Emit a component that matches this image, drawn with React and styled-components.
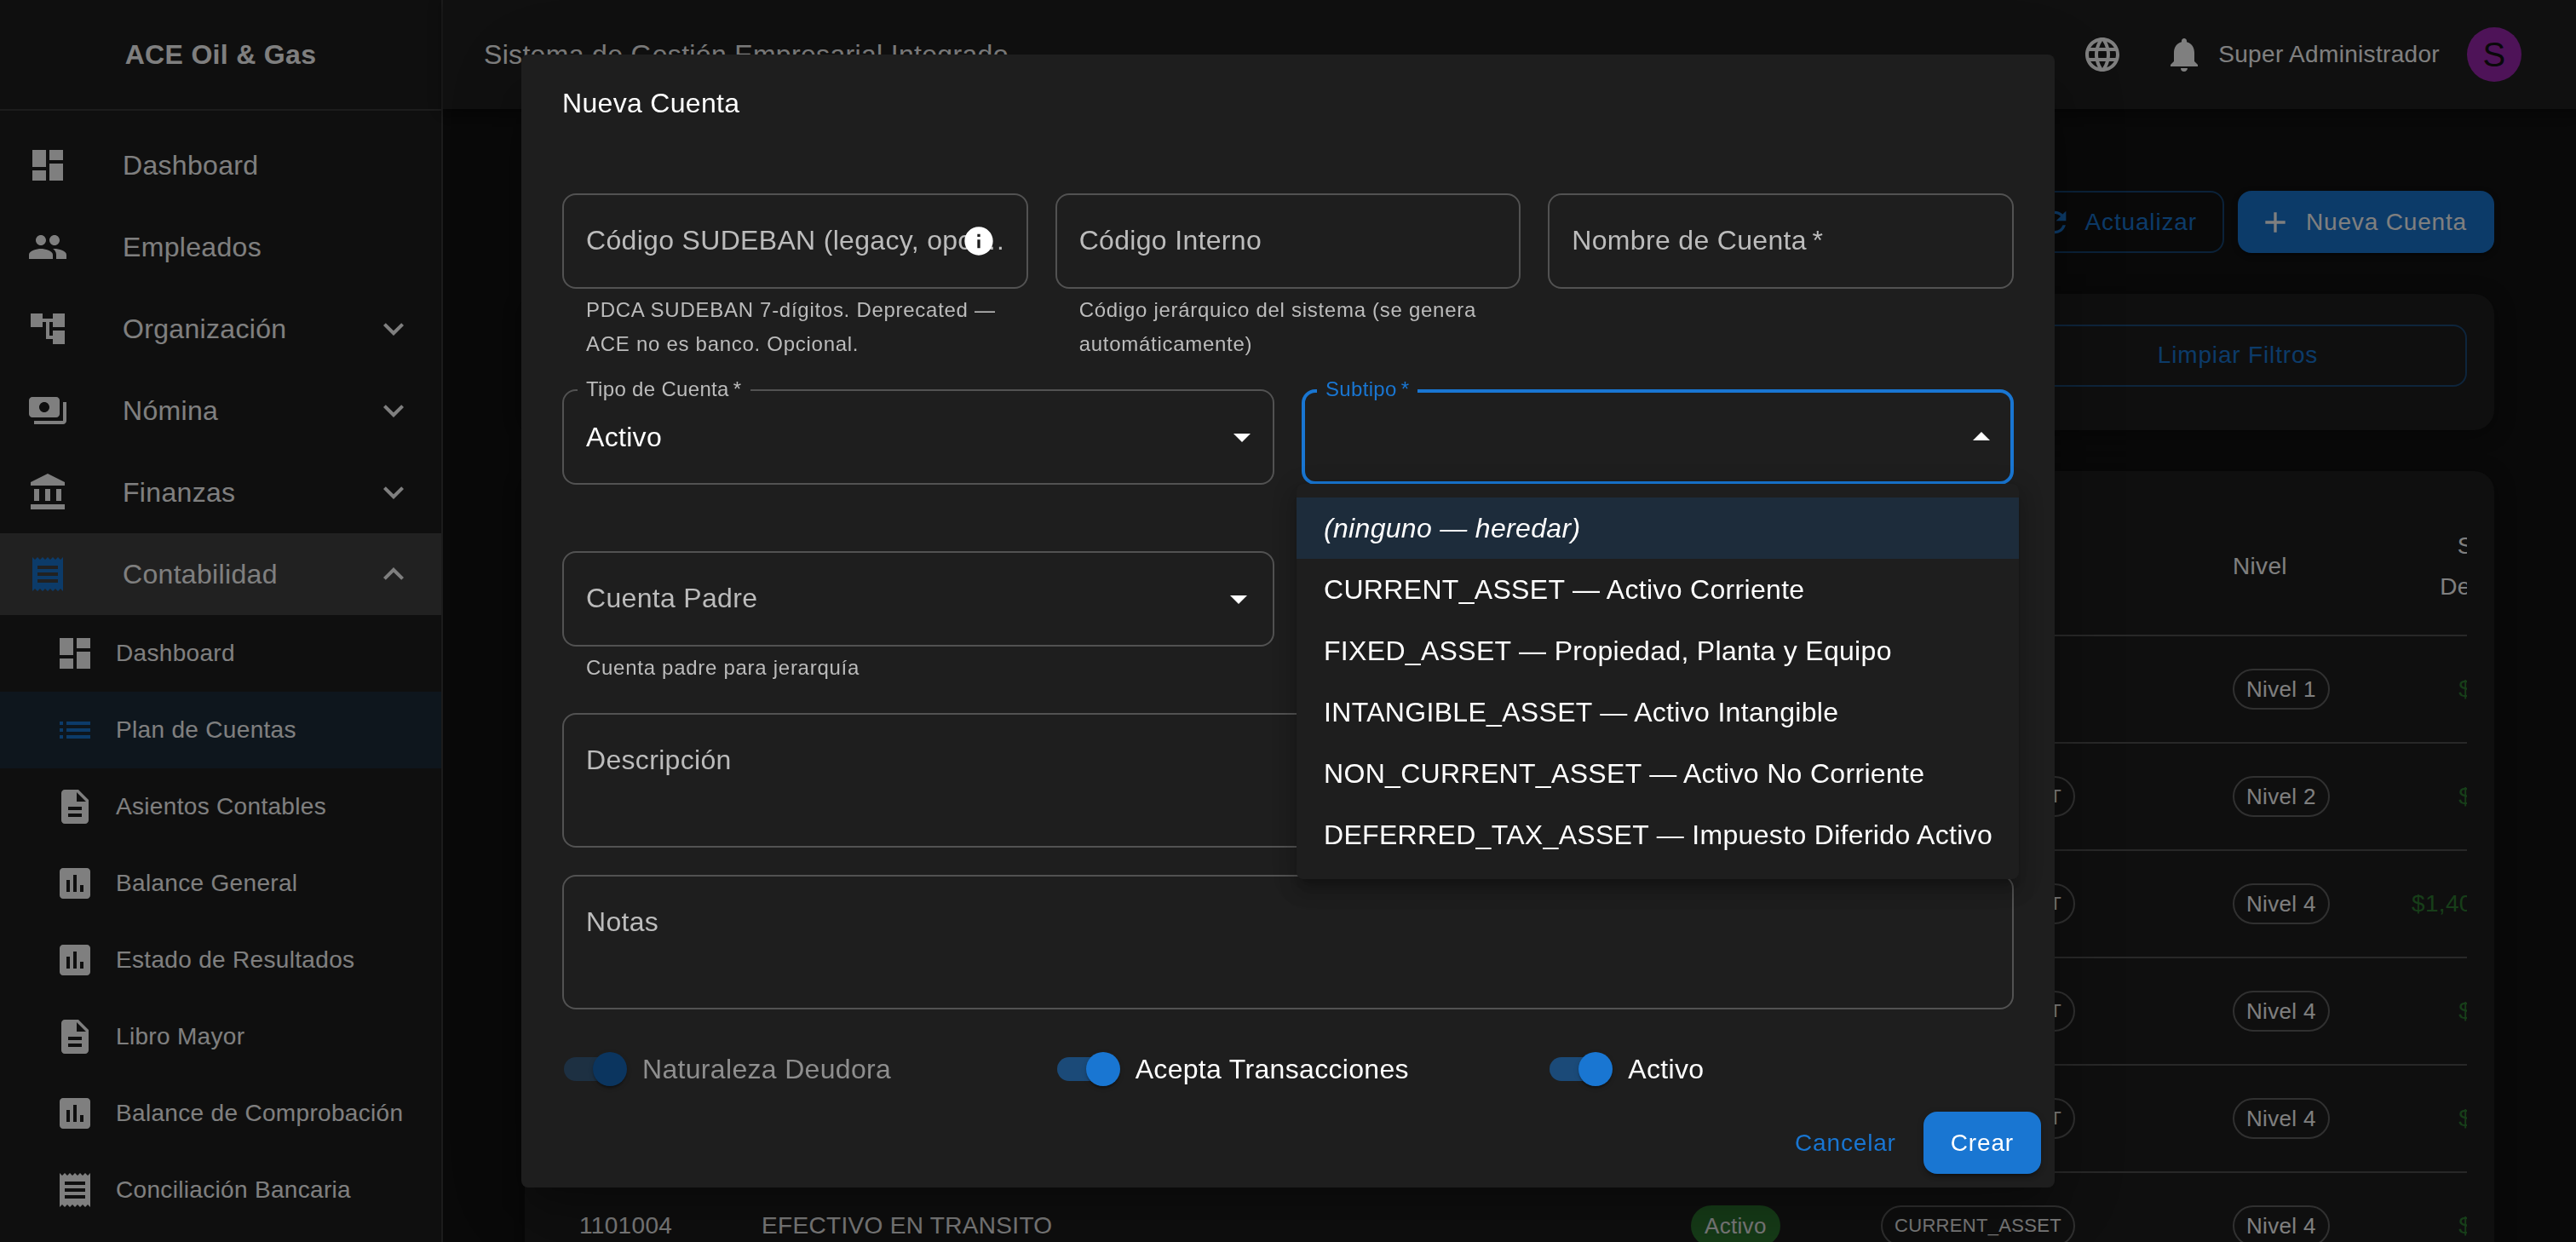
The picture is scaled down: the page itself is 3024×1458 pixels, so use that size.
import React from 'react'
import styled, { createGlobalStyle, css } from 'styled-components'
import {
  MdAccountBalance,
  MdAccountTree,
  MdAdd,
  MdArrowDropDown,
  MdAssessment,
  MdDashboard,
  MdDescription,
  MdExpandLess,
  MdExpandMore,
  MdInfo,
  MdLanguage,
  MdList,
  MdNotifications,
  MdPayments,
  MdPeople,
  MdReceipt,
  MdRefresh
} from 'react-icons/md'

const GlobalStyle = createGlobalStyle`
  :root {
    --paper: #1e1e1e;
    --primary: #1976d2;
    --success: #2e7d32;
    --selected: #1d2c3b;
    --divider: #393939;
    --outline: #525252;
    --muted: #bcbcbc;
  }

  * {
    box-sizing: border-box;
  }

  body {
    margin: 0;
    background: #121212;
    color: #fff;
    font-family: 'Liberation Sans', Arial, sans-serif;
    font-size: 32px;
    letter-spacing: 0.01em;
  }

  button, input, select, textarea {
    font: inherit;
    letter-spacing: inherit;
    color: inherit;
  }
`

const Page = styled.div`
  display: flex;
  height: 100vh;
  overflow: hidden;
`

/* Sidebar */

const Sidebar = styled.aside`
  flex: 0 0 520px;
  background: var(--paper);
  border-right: 2px solid var(--divider);
`

const Brand = styled.div`
  height: 130px;
  display: flex;
  align-items: center;
  justify-content: center;
  border-bottom: 2px solid var(--divider);
  font-weight: 700;
`

const Nav = styled.nav`
  padding-top: 16px;
`

const NavItem = styled.a`
  display: flex;
  align-items: center;
  height: 96px;
  padding: 0 32px;
  color: #fff;
  text-decoration: none;
  background: ${({ $open }) => ($open ? '#424242' : 'transparent')};

  span {
    flex: 1;
  }

  svg {
    width: 48px;
    height: 48px;
  }

  > svg:first-child {
    margin-right: 64px;
    color: ${({ $open }) => ($open ? 'var(--primary)' : 'inherit')};
  }
`

const SubItem = styled.a`
  display: flex;
  align-items: center;
  gap: 24px;
  height: 90px;
  padding-left: 64px;
  color: #fff;
  font-size: 28px;
  text-decoration: none;
  background: ${({ $selected }) => ($selected ? 'var(--selected)' : 'transparent')};

  svg {
    width: 48px;
    height: 48px;
    color: ${({ $selected }) => ($selected ? 'var(--primary)' : 'inherit')};
  }
`

/* Top bar */

const Body = styled.div`
  flex: 1;
  min-width: 0;
`

const TopBar = styled.header`
  position: relative;
  display: flex;
  align-items: center;
  height: 128px;
  padding: 0 48px;
  background: #202020;
  box-shadow: 0 4px 8px -2px rgba(0, 0, 0, 0.2), 0 8px 10px rgba(0, 0, 0, 0.14),
    0 2px 20px rgba(0, 0, 0, 0.12);
`

const AppName = styled.div`
  flex: 1;
`

const IconButton = styled.button`
  display: flex;
  padding: 16px;
  border: 0;
  background: none;

  & + & {
    margin-left: 16px;
  }

  svg {
    width: 48px;
    height: 48px;
  }
`

const UserName = styled.span`
  margin-right: 16px;
  font-size: 28px;
`

const Avatar = styled.span`
  display: flex;
  align-items: center;
  justify-content: center;
  width: 64px;
  height: 64px;
  border-radius: 50%;
  background: #9c27b0;
  color: #121212;
  font-size: 40px;
`

/* Page content */

const Main = styled.main`
  display: flex;
  flex-direction: column;
  gap: 48px;
  padding: 96px;
`

const PageHead = styled.div`
  display: flex;
  align-items: center;
  gap: 16px;
  height: 73px;
`

const PageTitle = styled.h1`
  flex: 1;
  margin: 0;
  font-size: 48px;
  font-weight: 400;
`

const Button = styled.button`
  display: inline-flex;
  align-items: center;
  justify-content: center;
  height: 73px;
  padding: 0 32px;
  border: 0;
  border-radius: 16px;
  background: none;
  color: var(--primary);
  font-size: 28px;
  letter-spacing: 0.03em;

  ${({ $variant }) =>
    $variant === 'text' &&
    css`
      padding: 0 16px;
    `}

  ${({ $variant }) =>
    $variant === 'outlined' &&
    css`
      padding: 0 30px;
      border: 2px solid rgba(25, 118, 210, 0.5);
    `}

  ${({ $variant }) =>
    $variant === 'contained' &&
    css`
      background: var(--primary);
      color: #fff;
      box-shadow: 0 6px 2px -4px rgba(0, 0, 0, 0.2), 0 4px 4px rgba(0, 0, 0, 0.14),
        0 2px 10px rgba(0, 0, 0, 0.12);
    `}

  svg {
    width: 40px;
    height: 40px;
    margin: 0 16px 0 -8px;
  }
`

const Card = styled.section`
  padding: 32px 32px 48px;
  border-radius: 24px;
  background: var(--paper);
  box-shadow: 0 4px 24px rgba(0, 0, 0, 0.4);
`

const Filters = styled.div`
  display: grid;
  grid-template-columns: repeat(4, 1fr);
  align-items: center;
  gap: 32px;
  height: 80px;

  button {
    grid-column: 4;
  }
`

const TableScroll = styled.div`
  overflow: hidden;
`

const Table = styled.table`
  width: 2564px;
  table-layout: fixed;
  border-collapse: separate;
  border-spacing: 0;
  font-size: 28px;
`

const Col = styled.col`
  width: ${({ $width }) => $width}px;
`

const Cell = styled.td`
  height: 126px;
  padding: 0 32px;
  border-bottom: 2px solid #515151;
  text-align: ${({ $right }) => ($right ? 'right' : 'left')};
  color: ${({ $green }) => ($green ? 'var(--success)' : 'inherit')};
`

const HeadCell = styled(Cell)`
  height: 162px;
  line-height: 48px;
  font-weight: 400;
`

const Chip = styled.span`
  display: inline-flex;
  align-items: center;
  height: 48px;
  padding: 0 ${({ $filled }) => ($filled ? 16 : 14)}px;
  border: ${({ $filled }) => ($filled ? '0' : '2px solid #616161')};
  border-radius: 24px;
  background: ${({ $filled }) => ($filled ? 'var(--success)' : 'transparent')};
  font-size: ${({ $small }) => ($small ? 22 : 26)}px;
  vertical-align: middle;
`

/* Dialog */

const Backdrop = styled.div`
  position: fixed;
  inset: 0;
  display: flex;
  align-items: center;
  justify-content: center;
  background: rgba(0, 0, 0, 0.5);
`

const DialogPaper = styled.div`
  display: flex;
  flex-direction: column;
  width: calc(100% - 128px);
  max-width: 1800px;
  max-height: calc(100% - 128px);
  border-radius: 8px;
  background: var(--paper);
  box-shadow: 0 22px 30px -14px rgba(0, 0, 0, 0.2), 0 48px 76px 6px rgba(0, 0, 0, 0.14),
    0 18px 92px 16px rgba(0, 0, 0, 0.12);
`

const DialogTitle = styled.h2`
  margin: 0;
  padding: 32px 48px;
  font-size: 32px;
  font-weight: 400;
  line-height: 51px;
`

const DialogContent = styled.div`
  flex: 1;
  display: flex;
  flex-direction: column;
  gap: 32px;
  min-height: 0;
  padding: 48px 48px 0;
  overflow-y: auto;
  scrollbar-width: none;
`

const Row = styled.div`
  flex: none;
  display: grid;
  grid-template-columns: repeat(${({ $cols }) => $cols}, minmax(0, 1fr));
  gap: 32px;
`

const Outline = styled.div`
  position: relative;
  display: flex;
  align-items: center;
  height: ${({ $multiline }) => ($multiline ? 158 : 112)}px;
  border-radius: 16px;
  box-shadow: inset 0 0 0
    ${({ $focused }) => ($focused ? '4px var(--primary)' : '2px var(--outline)')};

  input, select, textarea {
    width: 100%;
    height: 100%;
    padding: 0 28px;
    border: 0;
    outline: 0;
    background: none;
    appearance: none;
  }

  textarea {
    padding: 33px 28px;
    resize: none;
  }
`

const Label = styled.label`
  position: absolute;
  top: 32px;
  left: 28px;
  max-width: calc(100% - 48px);
  overflow: hidden;
  color: var(--muted);
  line-height: 46px;
  text-overflow: ellipsis;
  white-space: nowrap;
  pointer-events: none;

  ${({ $shrink }) =>
    $shrink &&
    css`
      top: -14px;
      left: 18px;
      padding: 0 10px;
      background: var(--paper);
      font-size: 24px;
      line-height: 28px;
    `}

  ${({ $focused }) =>
    $focused &&
    css`
      color: var(--primary);
    `}
`

const InfoMark = styled(MdInfo)`
  position: absolute;
  top: 36px;
  right: 38px;
  width: 40px;
  height: 40px;
`

const Arrow = styled(MdArrowDropDown)`
  position: absolute;
  top: 32px;
  right: ${({ $inset }) => $inset || 14}px;
  width: 48px;
  height: 48px;
  pointer-events: none;
  transform: ${({ $up }) => ($up ? 'rotate(180deg)' : 'none')};
`

const Helper = styled.p`
  margin: 5px 28px 1px;
  min-height: 40px;
  color: var(--muted);
  font-size: 24px;
  line-height: 40px;
  letter-spacing: 0.03em;
`

const Menu = styled.ul`
  position: absolute;
  z-index: 1;
  top: 111px;
  left: -6px;
  right: -6px;
  margin: 0;
  padding: 16px 0;
  border-radius: 8px;
  background: var(--paper);
  box-shadow: 0 10px 10px -6px rgba(0, 0, 0, 0.2), 0 16px 20px 2px rgba(0, 0, 0, 0.14),
    0 6px 28px 4px rgba(0, 0, 0, 0.12);
  list-style: none;
`

const MenuItem = styled.li`
  padding: 0 32px;
  background: ${({ $selected }) => ($selected ? 'var(--selected)' : 'transparent')};
  line-height: 72px;
  white-space: nowrap;
`

const SwitchLabel = styled.label`
  display: flex;
  align-items: center;
  color: ${({ $disabled }) => ($disabled ? '#8e8e8e' : '#fff')};
`

const Switch = styled.input.attrs({ type: 'checkbox', role: 'switch' })`
  position: relative;
  width: 74px;
  height: 40px;
  margin: 18px 18px 18px 2px;
  appearance: none;

  &::before {
    content: '';
    position: absolute;
    top: 6px;
    left: 0;
    width: 68px;
    height: 28px;
    border-radius: 14px;
    background: #1b4a78;
  }

  &::after {
    content: '';
    position: absolute;
    top: 0;
    right: 0;
    width: 40px;
    height: 40px;
    border-radius: 50%;
    background: var(--primary);
    box-shadow: 0 4px 2px -2px rgba(0, 0, 0, 0.2), 0 2px 2px rgba(0, 0, 0, 0.14),
      0 2px 6px rgba(0, 0, 0, 0.12);
  }

  &:disabled::before {
    background: #1d3042;
  }

  &:disabled::after {
    background: #0b355f;
  }
`

const DialogActions = styled.div`
  display: flex;
  justify-content: flex-end;
  gap: 16px;
  padding: 16px;
`

const navItems = [
  { label: 'Dashboard', icon: MdDashboard },
  { label: 'Empleados', icon: MdPeople },
  { label: 'Organización', icon: MdAccountTree, group: true },
  { label: 'Nómina', icon: MdPayments, group: true },
  { label: 'Finanzas', icon: MdAccountBalance, group: true },
  { label: 'Contabilidad', icon: MdReceipt, group: true, open: true }
]

const subItems = [
  { label: 'Dashboard', icon: MdDashboard },
  { label: 'Plan de Cuentas', icon: MdList, selected: true },
  { label: 'Asientos Contables', icon: MdDescription },
  { label: 'Balance General', icon: MdAssessment },
  { label: 'Estado de Resultados', icon: MdAssessment },
  { label: 'Libro Mayor', icon: MdDescription },
  { label: 'Balance de Comprobación', icon: MdAssessment },
  { label: 'Conciliación Bancaria', icon: MdReceipt }
]

const columns = [214, 1091, 223, 413, 210, 191, 222]

const accounts = [
  { code: '1000000', name: 'ACTIVO', level: 1, balance: '$0.00' },
  { code: '1100000', name: 'ACTIVO CORRIENTE', subtype: 'CURRENT_ASSET', level: 2, balance: '$0.00' },
  { code: '1101001', name: 'CAJA', subtype: 'CURRENT_ASSET', level: 4, balance: '$1,400.00' },
  { code: '1101002', name: 'CAJA CHICA', subtype: 'CURRENT_ASSET', level: 4, balance: '$0.00' },
  { code: '1101003', name: 'BANCOS', subtype: 'CURRENT_ASSET', level: 4, balance: '$0.00' },
  { code: '1101004', name: 'EFECTIVO EN TRANSITO', subtype: 'CURRENT_ASSET', level: 4, balance: '$0.00' }
]

const subtypes = [
  'CURRENT_ASSET — Activo Corriente',
  'FIXED_ASSET — Propiedad, Planta y Equipo',
  'INTANGIBLE_ASSET — Activo Intangible',
  'NON_CURRENT_ASSET — Activo No Corriente',
  'DEFERRED_TAX_ASSET — Impuesto Diferido Activo'
]

function SideNav() {
  return (
    <Sidebar>
      <Brand>ACE Oil &amp; Gas</Brand>
      <Nav>
        {navItems.map(({ label, icon: Icon, group, open }) => (
          <NavItem key={label} href="#" $open={open}>
            <Icon />
            <span>{label}</span>
            {group && (open ? <MdExpandLess /> : <MdExpandMore />)}
          </NavItem>
        ))}
        {subItems.map(({ label, icon: Icon, selected }) => (
          <SubItem key={label} href="#" $selected={selected}>
            <Icon />
            {label}
          </SubItem>
        ))}
      </Nav>
    </Sidebar>
  )
}

function AccountsTable() {
  return (
    <TableScroll>
      <Table>
        <colgroup>
          {columns.map((width, i) => (
            <Col key={i} $width={width} />
          ))}
        </colgroup>
        <thead>
          <tr>
            <HeadCell as="th">Código</HeadCell>
            <HeadCell as="th">Nombre</HeadCell>
            <HeadCell as="th">Tipo</HeadCell>
            <HeadCell as="th">Subtipo</HeadCell>
            <HeadCell as="th">Nivel</HeadCell>
            <HeadCell as="th" $right>Saldo Deudor</HeadCell>
            <HeadCell as="th" $right>Saldo Acreedor</HeadCell>
          </tr>
        </thead>
        <tbody>
          {accounts.map((account) => (
            <tr key={account.code}>
              <Cell>{account.code}</Cell>
              <Cell>{account.name}</Cell>
              <Cell><Chip $filled>Activo</Chip></Cell>
              <Cell>{account.subtype && <Chip $small>{account.subtype}</Chip>}</Cell>
              <Cell><Chip>Nivel {account.level}</Chip></Cell>
              <Cell $right $green>{account.balance}</Cell>
              <Cell $right>$0.00</Cell>
            </tr>
          ))}
        </tbody>
      </Table>
    </TableScroll>
  )
}

function AccountDialog() {
  return (
    <Backdrop>
      <DialogPaper role="dialog" aria-labelledby="dialog-title">
        <DialogTitle id="dialog-title">Nueva Cuenta</DialogTitle>
        <DialogContent>
          <Row $cols={3}>
            <div>
              <Outline>
                <input id="sudeban" />
                <Label htmlFor="sudeban">Código SUDEBAN (legacy, opcional)</Label>
                <InfoMark />
              </Outline>
              <Helper>PDCA SUDEBAN 7-dígitos. Deprecated — ACE no es banco. Opcional.</Helper>
            </div>
            <div>
              <Outline>
                <input id="codigo" />
                <Label htmlFor="codigo">Código Interno</Label>
              </Outline>
              <Helper>Código jerárquico del sistema (se genera automáticamente)</Helper>
            </div>
            <div>
              <Outline>
                <input id="nombre" />
                <Label htmlFor="nombre">Nombre de Cuenta{'\u2009'}*</Label>
              </Outline>
            </div>
          </Row>

          <Row $cols={2}>
            <div>
              <Outline>
                <select id="tipo" defaultValue="activo">
                  <option value="activo">Activo</option>
                </select>
                <Label htmlFor="tipo" $shrink>Tipo de Cuenta{'\u2009'}*</Label>
                <Arrow />
              </Outline>
            </div>
            <div>
              <Outline $focused>
                <select id="subtipo" defaultValue="">
                  <option value="" aria-label="ninguno" />
                </select>
                <Label htmlFor="subtipo" $shrink $focused>Subtipo{'\u2009'}*</Label>
                <Arrow $up />
                <Menu role="listbox" aria-label="Subtipo">
                  <MenuItem role="option" aria-selected="true" $selected>
                    <em>(ninguno — heredar)</em>
                  </MenuItem>
                  {subtypes.map((subtype) => (
                    <MenuItem key={subtype} role="option">{subtype}</MenuItem>
                  ))}
                </Menu>
              </Outline>
              <Helper />
            </div>
          </Row>

          <Row $cols={2}>
            <div>
              <Outline>
                <input id="padre" role="combobox" aria-expanded="false" />
                <Label htmlFor="padre">Cuenta Padre</Label>
                <Arrow $inset={18} />
              </Outline>
              <Helper>Cuenta padre para jerarquía</Helper>
            </div>
          </Row>

          <Row $cols={1}>
            <Outline $multiline>
              <textarea id="descripcion" />
              <Label htmlFor="descripcion">Descripción</Label>
            </Outline>
          </Row>

          <Row $cols={1}>
            <Outline $multiline>
              <textarea id="notas" />
              <Label htmlFor="notas">Notas</Label>
            </Outline>
          </Row>

          <Row $cols={3}>
            <SwitchLabel $disabled>
              <Switch defaultChecked disabled />
              Naturaleza Deudora
            </SwitchLabel>
            <SwitchLabel>
              <Switch defaultChecked />
              Acepta Transacciones
            </SwitchLabel>
            <SwitchLabel>
              <Switch defaultChecked />
              Activo
            </SwitchLabel>
          </Row>
        </DialogContent>
        <DialogActions>
          <Button $variant="text">Cancelar</Button>
          <Button $variant="contained">Crear</Button>
        </DialogActions>
      </DialogPaper>
    </Backdrop>
  )
}

function App() {
  return (
    <>
      <GlobalStyle />
      <Page>
        <SideNav />
        <Body>
          <TopBar>
            <AppName>Sistema de Gestión Empresarial Integrado</AppName>
            <IconButton aria-label="Idioma"><MdLanguage /></IconButton>
            <IconButton aria-label="Notificaciones"><MdNotifications /></IconButton>
            <UserName>Super Administrador</UserName>
            <IconButton as="div"><Avatar>S</Avatar></IconButton>
          </TopBar>
          <Main>
            <PageHead>
              <PageTitle>Plan de Cuentas</PageTitle>
              <Button $variant="outlined"><MdRefresh />Actualizar</Button>
              <Button $variant="contained"><MdAdd />Nueva Cuenta</Button>
            </PageHead>
            <Card>
              <Filters>
                <Button $variant="outlined">Limpiar Filtros</Button>
              </Filters>
            </Card>
            <Card>
              <AccountsTable />
            </Card>
          </Main>
        </Body>
      </Page>
      <AccountDialog />
    </>
  )
}

export default App
